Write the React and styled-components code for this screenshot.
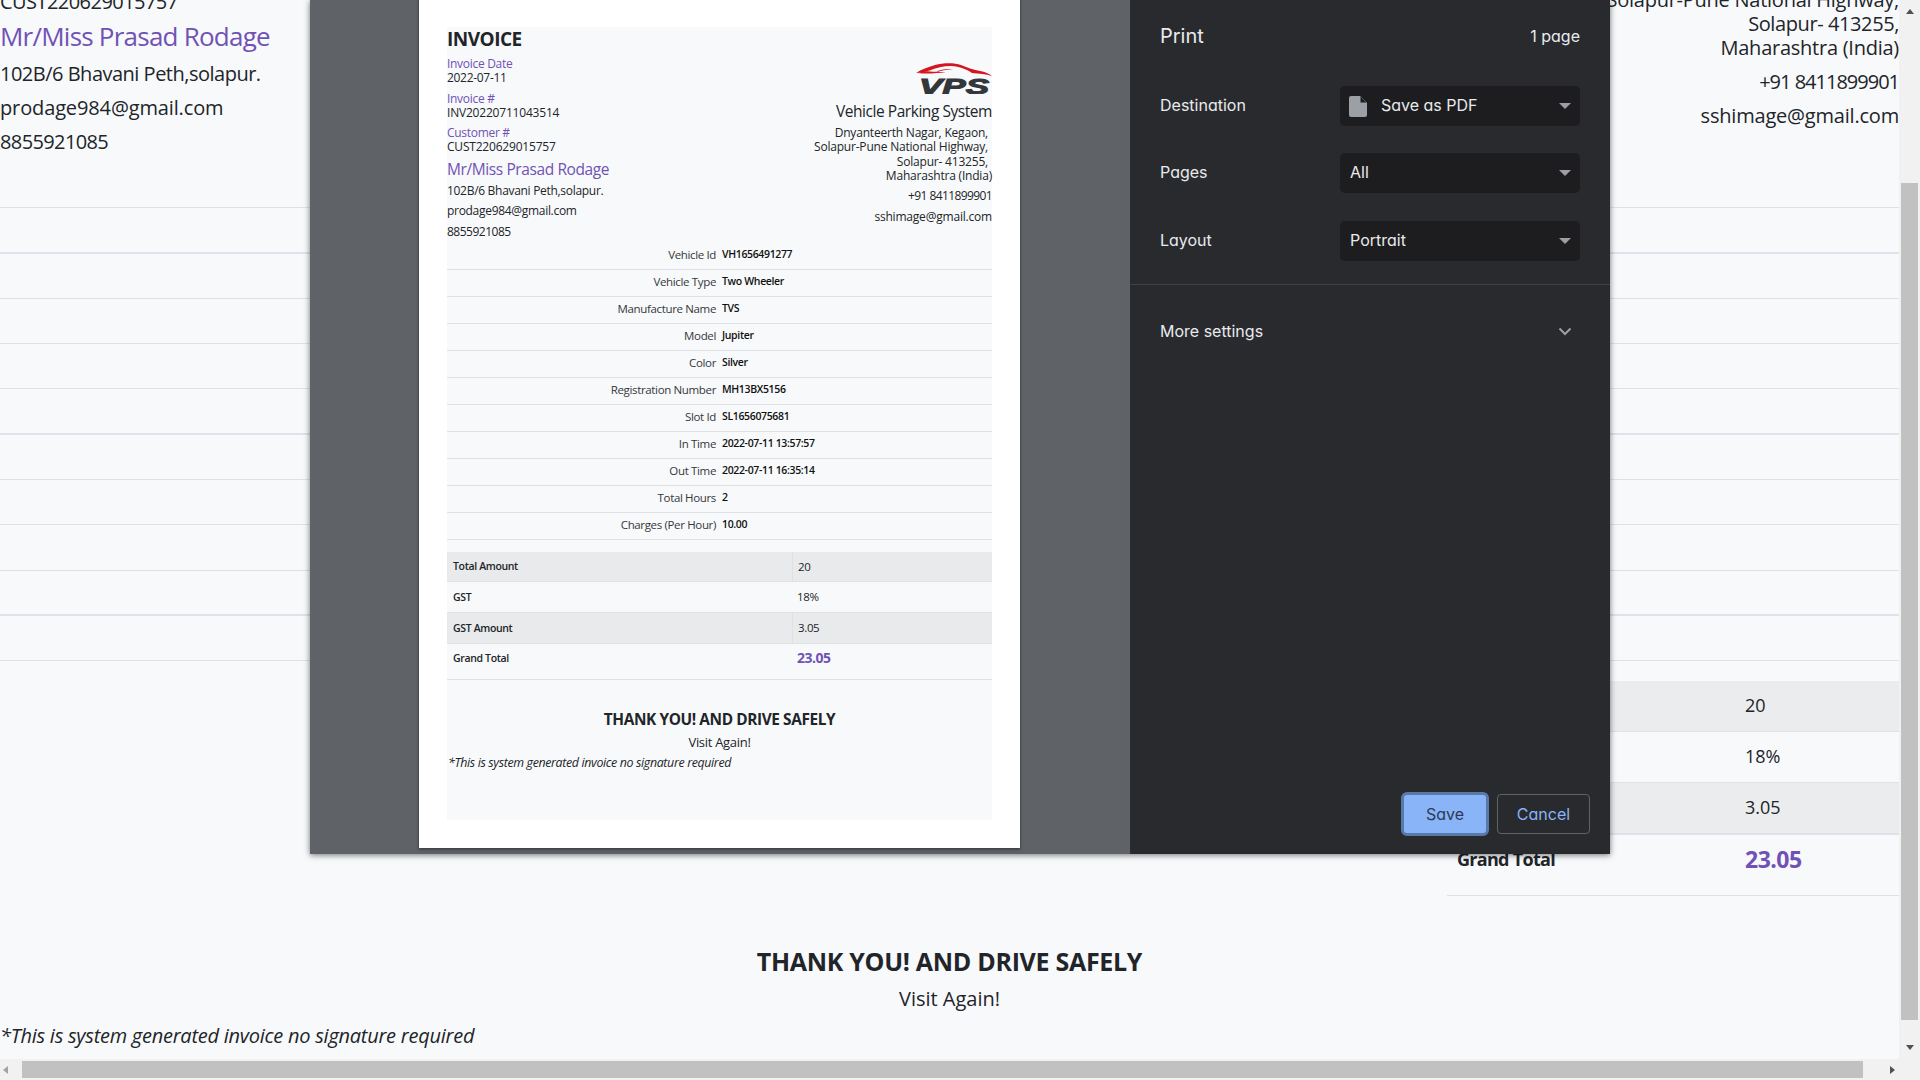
import React from 'react';
import styled, {createGlobalStyle} from 'styled-components';

const GlobalStyle = createGlobalStyle`
  html, body {
    margin: 0;
    padding: 0;
    height: 100%;
    overflow: hidden;
    background: #f8f9fb;
  }
  * { box-sizing: border-box; }
`;

const PAGE_FONT = `"Open Sans", "Noto Sans", sans-serif`;
const DIALOG_FONT = `Inter, "Noto Sans", sans-serif`;
const PURPLE = '#7052b6';
const INK = '#212529';

/* window + browser scrollbars */
const Viewport = styled.div`
  width: 1920px;
  height: 1080px;
  display: grid;
  grid-template-columns: 1899px 21px;
  grid-template-rows: 1059px 21px;
  background: #f8f9fb;
  overflow: hidden;
`;

const VTrack = styled.div`
  grid-column: 2;
  grid-row: 1;
  background: #f1f1f1;
  display: flex;
  flex-direction: column;
  align-items: center;
  padding: 9px 0;
`;

const VThumb = styled.div`
  width: 17px;
  height: 837px;
  margin: 169px 0 auto;
  background: #c1c1c1;
`;

const HTrack = styled.div`
  grid-column: 1 / 3;
  grid-row: 2;
  background: #f1f1f1;
  display: flex;
  align-items: center;
  padding: 0 25px 0 3px;
`;

const HThumb = styled.div`
  width: 1841px;
  height: 17px;
  margin: 0 auto 0 14px;
  background: #c1c1c1;
`;

const Arrow = styled.span`
  width: 0;
  height: 0;
  flex: none;
  border-style: solid;
  border-color: transparent;
  border-width: ${p => (p.$dir === 'up' || p.$dir === 'down' ? '0 4.5px 5px' : '4.5px 5px 4.5px 0')};
  border-bottom-color: ${p => (p.$dir === 'up' ? '#505050' : 'transparent')};
  border-right-color: ${p => (p.$dir === 'left' ? '#a3a3a3' : 'transparent')};
  transform: ${p => (p.$dir === 'down' ? 'rotate(180deg)' : p.$dir === 'right' ? 'rotate(180deg)' : 'none')};
  ${p => p.$dir === 'down' && 'border-bottom-color: #505050;'}
  ${p => p.$dir === 'right' && 'border-right-color: #505050;'}
`;

/* the document behind the dialog, scrolled down */
const Sheet = styled.main`
  grid-column: 1;
  grid-row: 1;
  overflow: hidden;
  font-family: ${PAGE_FONT};
  color: ${INK};
`;

const Scrolled = styled.div`
  margin-top: -36px;
`;

const PageHeader = styled.header`
  height: 199px;
  display: flex;
  justify-content: space-between;
`;

const CustomerBlock = styled.div`
  padding-top: 26px;
`;

const CompanyBlock = styled.div`
  text-align: right;
`;

const Text20 = styled.div`
  font-size: 20px;
  line-height: ${p => p.$lh || 34}px;
  letter-spacing: ${p => p.$ls ?? -0.25}px;
  margin-top: ${p => p.$mt || 0}px;
`;

const CustomerName = styled.div`
  font-size: 26px;
  line-height: 32px;
  letter-spacing: -0.77px;
  color: ${PURPLE};
  margin-top: 6px;
  margin-bottom: 5px;
`;

const DetailLine = styled.div`
  height: 45.3px;
  border-bottom: ${p => (p.$thick ? '2px solid #e0e1ea' : '1px solid #dfe1e5')};
`;

const Totals = styled.section`
  width: 452px;
  margin: 20px 0 0 auto;
`;

const TotalRow = styled.div`
  display: grid;
  grid-template-columns: 288px 1fr;
  align-items: center;
  height: ${p => p.$h}px;
  padding-left: 10px;
  padding-bottom: ${p => p.$pb || 2}px;
  background: ${p => (p.$shade ? '#ebecee' : 'transparent')};
  border-bottom: ${p => (p.$thick ? '2px solid #dfe0ea' : '1px solid #dfe1e5')};
  font-size: 18px;
`;

const TotalLabel = styled.span`
  font-weight: 700;
  letter-spacing: -0.7px;
`;

const GrandValue = styled.span`
  font-size: 23px;
  font-weight: 700;
  letter-spacing: -0.5px;
  color: ${PURPLE};
`;

const PageFooter = styled.footer`
  margin-top: 48px;
`;

const ThankYou = styled.h3`
  margin: 0;
  font-size: 25px;
  line-height: 34px;
  font-weight: 700;
  letter-spacing: -0.3px;
  text-align: center;
`;

const VisitAgain = styled.div`
  margin-top: 3px;
  font-size: 20px;
  line-height: 36px;
  letter-spacing: 0;
  text-align: center;
`;

const SignatureNote = styled.div`
  font-size: 20px;
  line-height: 38px;
  font-style: italic;
  letter-spacing: -0.25px;
`;

/* print dialog */
const PrintDialog = styled.div`
  position: fixed;
  left: 310px;
  top: 0;
  width: 1300px;
  height: 854px;
  display: grid;
  grid-template-columns: 820px 480px;
  box-shadow: 0 1px 6px rgba(0, 0, 0, 0.55);
`;

const PreviewPane = styled.div`
  background: #5f6266;
  overflow: hidden;
  display: flex;
  justify-content: center;
  align-items: flex-end;
  padding-bottom: 6px;
`;

const Paper = styled.div`
  width: 601px;
  height: 860px;
  flex: none;
  margin-left: -1px;
  background: #fff;
  padding: 39px 28px 28px;
  box-shadow: 0 1px 3px rgba(0, 0, 0, 0.5);
  font-family: ${PAGE_FONT};
  color: ${INK};
`;

const PaperInner = styled.div`
  height: 100%;
  background: #f8f9fa;
`;

const PaperHeader = styled.div`
  height: 216px;
  display: flex;
  justify-content: space-between;
`;

const PaperTitle = styled.h2`
  margin: 0 0 6px;
  font-size: 19px;
  line-height: 24px;
  font-weight: 700;
  letter-spacing: -0.5px;
`;

const Meta = styled.div`
  margin-bottom: 6.5px;
`;

const MetaLabel = styled.div`
  font-size: 12px;
  line-height: 14px;
  letter-spacing: -0.3px;
  color: ${PURPLE};
`;

const Small = styled.div`
  font-size: ${p => p.$size || 12}px;
  line-height: ${p => p.$lh || 14}px;
  letter-spacing: ${p => p.$ls ?? -0.3}px;
  margin-top: ${p => p.$mt || 0}px;
  padding-right: ${p => (p.$inset ? 4 : 0)}px;
`;

const PaperName = styled.div`
  font-size: 15.5px;
  line-height: 20px;
  letter-spacing: -0.4px;
  color: ${PURPLE};
  margin: -2px 0 5px;
`;

const PaperCompany = styled.div`
  display: flex;
  flex-direction: column;
  align-items: flex-end;
  text-align: right;
  padding-top: 36px;
`;

const PaperCompanyName = styled.div`
  font-size: 15.5px;
  line-height: 20px;
  letter-spacing: -0.45px;
  margin: 7px 0 5px;
`;

const PaperRow = styled.div`
  display: grid;
  grid-template-columns: 269px 1fr;
  column-gap: 6px;
  height: 27px;
  padding-top: 5px;
  border-bottom: 1px solid #dfe1e5;
  font-size: 10.5px;
  line-height: 14px;
  letter-spacing: -0.35px;
`;

const PaperRowLabel = styled.span`
  font-size: 11.5px;
  text-align: right;
  color: #34383d;
`;

const PaperRowValue = styled.span`
  font-weight: 600;
  color: #111;
  margin-top: -1.5px;
`;

const PaperTotals = styled.div`
  margin-top: 12px;
`;

const PaperTotalRow = styled.div`
  display: grid;
  grid-template-columns: 345px 1fr;
  align-items: center;
  height: ${p => p.$h}px;
  background: ${p => (p.$shade ? '#e9eaec' : 'transparent')};
  border-bottom: 1px solid #dfe1e5;
  font-size: 10.5px;
  letter-spacing: -0.35px;
`;

const PaperTotalLabel = styled.span`
  padding-left: 6px;
  padding-bottom: ${p => (p.$top ? 0 : 1)}px;
  font-weight: 600;
  align-self: ${p => (p.$top ? 'start' : 'center')};
  margin-top: ${p => (p.$top ? 7 : 0)}px;
`;

const PaperTotalValue = styled.span`
  height: 100%;
  display: flex;
  align-items: ${p => (p.$top ? 'flex-start' : 'center')};
  padding-left: 5px;
  padding-bottom: ${p => (p.$top ? 0 : 1)}px;
  font-size: 11.5px;
  border-left: ${p => (p.$shade ? '1px solid #dfe1e5' : '0')};
`;

const PaperGrand = styled.span`
  font-size: 14px;
  line-height: 22px;
  margin-top: 3px;
  font-weight: 700;
  color: ${PURPLE};
  letter-spacing: -0.5px;
`;

const PaperThanks = styled.div`
  margin-top: 29px;
  font-size: 15.4px;
  line-height: 22px;
  font-weight: 700;
  letter-spacing: -0.4px;
  text-align: center;
`;

const PaperVisit = styled.div`
  font-size: 13px;
  line-height: 22px;
  letter-spacing: -0.3px;
  text-align: center;
`;

const PaperNote = styled.div`
  margin-left: 1px;
  font-size: 12.4px;
  line-height: 20px;
  font-style: italic;
  letter-spacing: -0.35px;
`;

const SettingsPane = styled.aside`
  background: #292a2d;
  color: #e8eaed;
  font-family: ${DIALOG_FONT};
  font-feature-settings: 'cv11' 1;
  font-size: 16px;
  display: flex;
  flex-direction: column;
  position: relative;
`;

const SettingsHead = styled.div`
  height: 72px;
  padding: 0 30px;
  display: flex;
  align-items: center;
  justify-content: space-between;
`;

const SettingsTitle = styled.div`
  font-size: 20px;
`;

const SettingRow = styled.div`
  height: 40px;
  margin: ${p => p.$mt}px 30px 0;
  display: flex;
  align-items: center;
  justify-content: space-between;
`;

const SettingLabel = styled.span`
  padding-bottom: 2px;
`;

const SelectBox = styled.div`
  width: 240px;
  height: 40px;
  padding: 0 9px 0 ${p => (p.$icon ? 9 : 10)}px;
  display: flex;
  align-items: center;
  gap: 14px;
  border-radius: 5px;
  background: #1d1d1f;
`;

const SelectValue = styled.span`
  flex: 1;
  padding-bottom: 2px;
`;

const Caret = styled.span`
  width: 0;
  height: 0;
  border-style: solid;
  border-width: 6px 6.5px 0;
  border-color: #9aa0a6 transparent transparent;
`;

const Divider = styled.div`
  height: 1px;
  margin-top: 23px;
  background: #3f4044;
`;

const MoreSettings = styled.div`
  height: 92px;
  padding: 0 30px;
  display: flex;
  align-items: center;
  justify-content: space-between;
`;

const DialogButtons = styled.div`
  margin-top: auto;
  padding: 0 20px 18px 0;
  display: flex;
  justify-content: flex-end;
  align-items: center;
  gap: 8px;
`;

const SaveButton = styled.button`
  width: 88px;
  height: 44px;
  border: 3px solid #5a79ab;
  border-radius: 6px;
  background: #8ab4f8;
  color: #2b3b57;
  font: inherit;
  font-size: 16px;
  padding: 0;
`;

const CancelButton = styled.button`
  width: 93px;
  height: 40px;
  border: 1px solid #5f6368;
  border-radius: 4px;
  background: transparent;
  color: #8ab4f8;
  font: inherit;
  font-size: 16px;
  padding: 0;
`;

const DocIcon = () => (
  <svg width="18" height="21" viewBox="0 0 18 21" style={{flex: 'none'}}>
    <path d="M2 0h9l7 7v12a2 2 0 0 1-2 2H2a2 2 0 0 1-2-2V2a2 2 0 0 1 2-2z" fill="#9aa0a6" />
    <path d="M11.5 0.8v5.7h5.7z" fill="#1d1d1f" />
  </svg>
);

const Chevron = () => (
  <svg width="14" height="9" viewBox="0 0 14 9" style={{marginRight: 8}}>
    <path d="M1.5 1.5L7 7l5.5-5.5" fill="none" stroke="#9aa0a6" strokeWidth="2" />
  </svg>
);

const VpsLogo = () => (
  <svg width="76" height="31" viewBox="0 0 76 31">
    <path
      d="M0 10C6 6 13 4 19 2 27 0 38-0.5 45 2 52 5 58 7 64 8 69 9 73 10.5 76 13 70 11 63 10.5 56 10 50 6 44 3.5 35 3 27 3 20 5 15 7 12 8 8 9.5 0 10z"
      fill="#d3161f"
    />
    <path d="M2 10C10 11 20 10.5 30 9 20 9 12 8.5 8 8z" fill="#d3161f" />
    <path d="M19 9C24 6.5 30 5.5 37 6 31 6.5 25 7.5 19 9z" fill="#d3161f" />
    <text
      x="3"
      y="31"
      fontFamily='"Liberation Sans", sans-serif'
      fontSize="22"
      fontWeight="700"
      fontStyle="italic"
      fill="#33363a"
      stroke="#33363a"
      strokeWidth="1"
      textLength="70"
      lengthAdjust="spacingAndGlyphs"
    >
      VPS
    </text>
  </svg>
);

const detailRows = [
  ['Vehicle Id', 'VH1656491277'],
  ['Vehicle Type', 'Two Wheeler'],
  ['Manufacture Name', 'TVS'],
  ['Model', 'Jupiter'],
  ['Color', 'Silver'],
  ['Registration Number', 'MH13BX5156'],
  ['Slot Id', 'SL1656075681'],
  ['In Time', '2022-07-11 13:57:57'],
  ['Out Time', '2022-07-11 16:35:14'],
  ['Total Hours', '2'],
  ['Charges (Per Hour)', '10.00'],
];

const THICK_LINES = [1, 5, 9];

const PaperPreview = () => (
  <Paper>
    <PaperInner>
      <PaperHeader>
        <div>
          <PaperTitle>INVOICE</PaperTitle>
          <Meta>
            <MetaLabel>Invoice Date</MetaLabel>
            <Small>2022-07-11</Small>
          </Meta>
          <Meta>
            <MetaLabel>Invoice #</MetaLabel>
            <Small $ls={-0.2}>INV20220711043514</Small>
          </Meta>
          <Meta>
            <MetaLabel>Customer #</MetaLabel>
            <Small $ls={-0.2}>CUST220629015757</Small>
          </Meta>
          <PaperName>Mr/Miss Prasad Rodage</PaperName>
          <Small>102B/6 Bhavani Peth,solapur.</Small>
          <Small $mt={6}>prodage984@gmail.com</Small>
          <Small $mt={7} $ls={-0.5}>8855921085</Small>
        </div>
        <PaperCompany>
          <VpsLogo />
          <PaperCompanyName>Vehicle Parking System</PaperCompanyName>
          <Small $lh={14.4} $ls={-0.2} $inset>Dnyanteerth Nagar, Kegaon,</Small>
          <Small $lh={14.4} $ls={-0.2} $inset>Solapur-Pune National Highway,</Small>
          <Small $lh={14.4} $ls={-0.2} $inset>Solapur- 413255,</Small>
          <Small $lh={14.4} $ls={-0.2}>Maharashtra (India)</Small>
          <Small $mt={5.5} $ls={-0.6}>+91 8411899901</Small>
          <Small $mt={7} $ls={-0.2}>sshimage@gmail.com</Small>
        </PaperCompany>
      </PaperHeader>
      {detailRows.map(([label, value]) => (
        <PaperRow key={label}>
          <PaperRowLabel>{label}</PaperRowLabel>
          <PaperRowValue>{value}</PaperRowValue>
        </PaperRow>
      ))}
      <PaperTotals>
        <PaperTotalRow $h={30} $shade>
          <PaperTotalLabel>Total Amount</PaperTotalLabel>
          <PaperTotalValue $shade>20</PaperTotalValue>
        </PaperTotalRow>
        <PaperTotalRow $h={31}>
          <PaperTotalLabel>GST</PaperTotalLabel>
          <PaperTotalValue>18%</PaperTotalValue>
        </PaperTotalRow>
        <PaperTotalRow $h={31} $shade>
          <PaperTotalLabel>GST Amount</PaperTotalLabel>
          <PaperTotalValue $shade>3.05</PaperTotalValue>
        </PaperTotalRow>
        <PaperTotalRow $h={36}>
          <PaperTotalLabel $top>Grand Total</PaperTotalLabel>
          <PaperTotalValue $top><PaperGrand>23.05</PaperGrand></PaperTotalValue>
        </PaperTotalRow>
      </PaperTotals>
      <PaperThanks>THANK YOU! AND DRIVE SAFELY</PaperThanks>
      <PaperVisit>Visit Again!</PaperVisit>
      <PaperNote>*This is system generated invoice no signature required</PaperNote>
    </PaperInner>
  </Paper>
);

const App = () => (
  <Viewport>
    <GlobalStyle />
    <Sheet>
      <Scrolled>
        <PageHeader>
          <CustomerBlock>
            <Text20 $lh={24} $ls={-0.55}>CUST220629015757</Text20>
            <CustomerName>Mr/Miss Prasad Rodage</CustomerName>
            <Text20 $ls={-0.5}>102B/6 Bhavani Peth,solapur.</Text20>
            <Text20 $ls={-0.13}>prodage984@gmail.com</Text20>
            <Text20 $ls={-0.62}>8855921085</Text20>
          </CustomerBlock>
          <CompanyBlock>
            <Text20 $lh={24}>Dnyanteerth Nagar, Kegaon,</Text20>
            <Text20 $lh={24}>Solapur-Pune National Highway,</Text20>
            <Text20 $lh={24} $ls={-0.4}>Solapur- 413255,</Text20>
            <Text20 $lh={24}>Maharashtra (India)</Text20>
            <Text20 $mt={5} $ls={-1}>+91 8411899901</Text20>
            <Text20 $ls={-0.2}>sshimage@gmail.com</Text20>
          </CompanyBlock>
        </PageHeader>
        {detailRows.map(([label], i) => (
          <DetailLine key={label} $thick={THICK_LINES.includes(i)} />
        ))}
        <Totals>
          <TotalRow $h={51} $shade>
            <span />
            <span>20</span>
          </TotalRow>
          <TotalRow $h={51}>
            <span />
            <span>18%</span>
          </TotalRow>
          <TotalRow $h={52} $shade $thick>
            <span />
            <span>3.05</span>
          </TotalRow>
          <TotalRow $h={61} $pb={12}>
            <TotalLabel>Grand Total</TotalLabel>
            <GrandValue>23.05</GrandValue>
          </TotalRow>
        </Totals>
        <PageFooter>
          <ThankYou>THANK YOU! AND DRIVE SAFELY</ThankYou>
          <VisitAgain>Visit Again!</VisitAgain>
          <SignatureNote>*This is system generated invoice no signature required</SignatureNote>
        </PageFooter>
      </Scrolled>
    </Sheet>
    <VTrack>
      <Arrow $dir="up" />
      <VThumb />
      <Arrow $dir="down" />
    </VTrack>
    <HTrack>
      <Arrow $dir="left" />
      <HThumb />
      <Arrow $dir="right" />
    </HTrack>
    <PrintDialog>
      <PreviewPane>
        <PaperPreview />
      </PreviewPane>
      <SettingsPane>
        <SettingsHead>
          <SettingsTitle>Print</SettingsTitle>
          <span>1 page</span>
        </SettingsHead>
        <SettingRow $mt={14}>
          <SettingLabel>Destination</SettingLabel>
          <SelectBox $icon>
            <DocIcon />
            <SelectValue>Save as PDF</SelectValue>
            <Caret />
          </SelectBox>
        </SettingRow>
        <SettingRow $mt={27}>
          <SettingLabel>Pages</SettingLabel>
          <SelectBox>
            <SelectValue>All</SelectValue>
            <Caret />
          </SelectBox>
        </SettingRow>
        <SettingRow $mt={28}>
          <SettingLabel>Layout</SettingLabel>
          <SelectBox>
            <SelectValue>Portrait</SelectValue>
            <Caret />
          </SelectBox>
        </SettingRow>
        <Divider />
        <MoreSettings>
          <span>More settings</span>
          <Chevron />
        </MoreSettings>
        <DialogButtons>
          <SaveButton>Save</SaveButton>
          <CancelButton>Cancel</CancelButton>
        </DialogButtons>
      </SettingsPane>
    </PrintDialog>
  </Viewport>
);

export default App;
